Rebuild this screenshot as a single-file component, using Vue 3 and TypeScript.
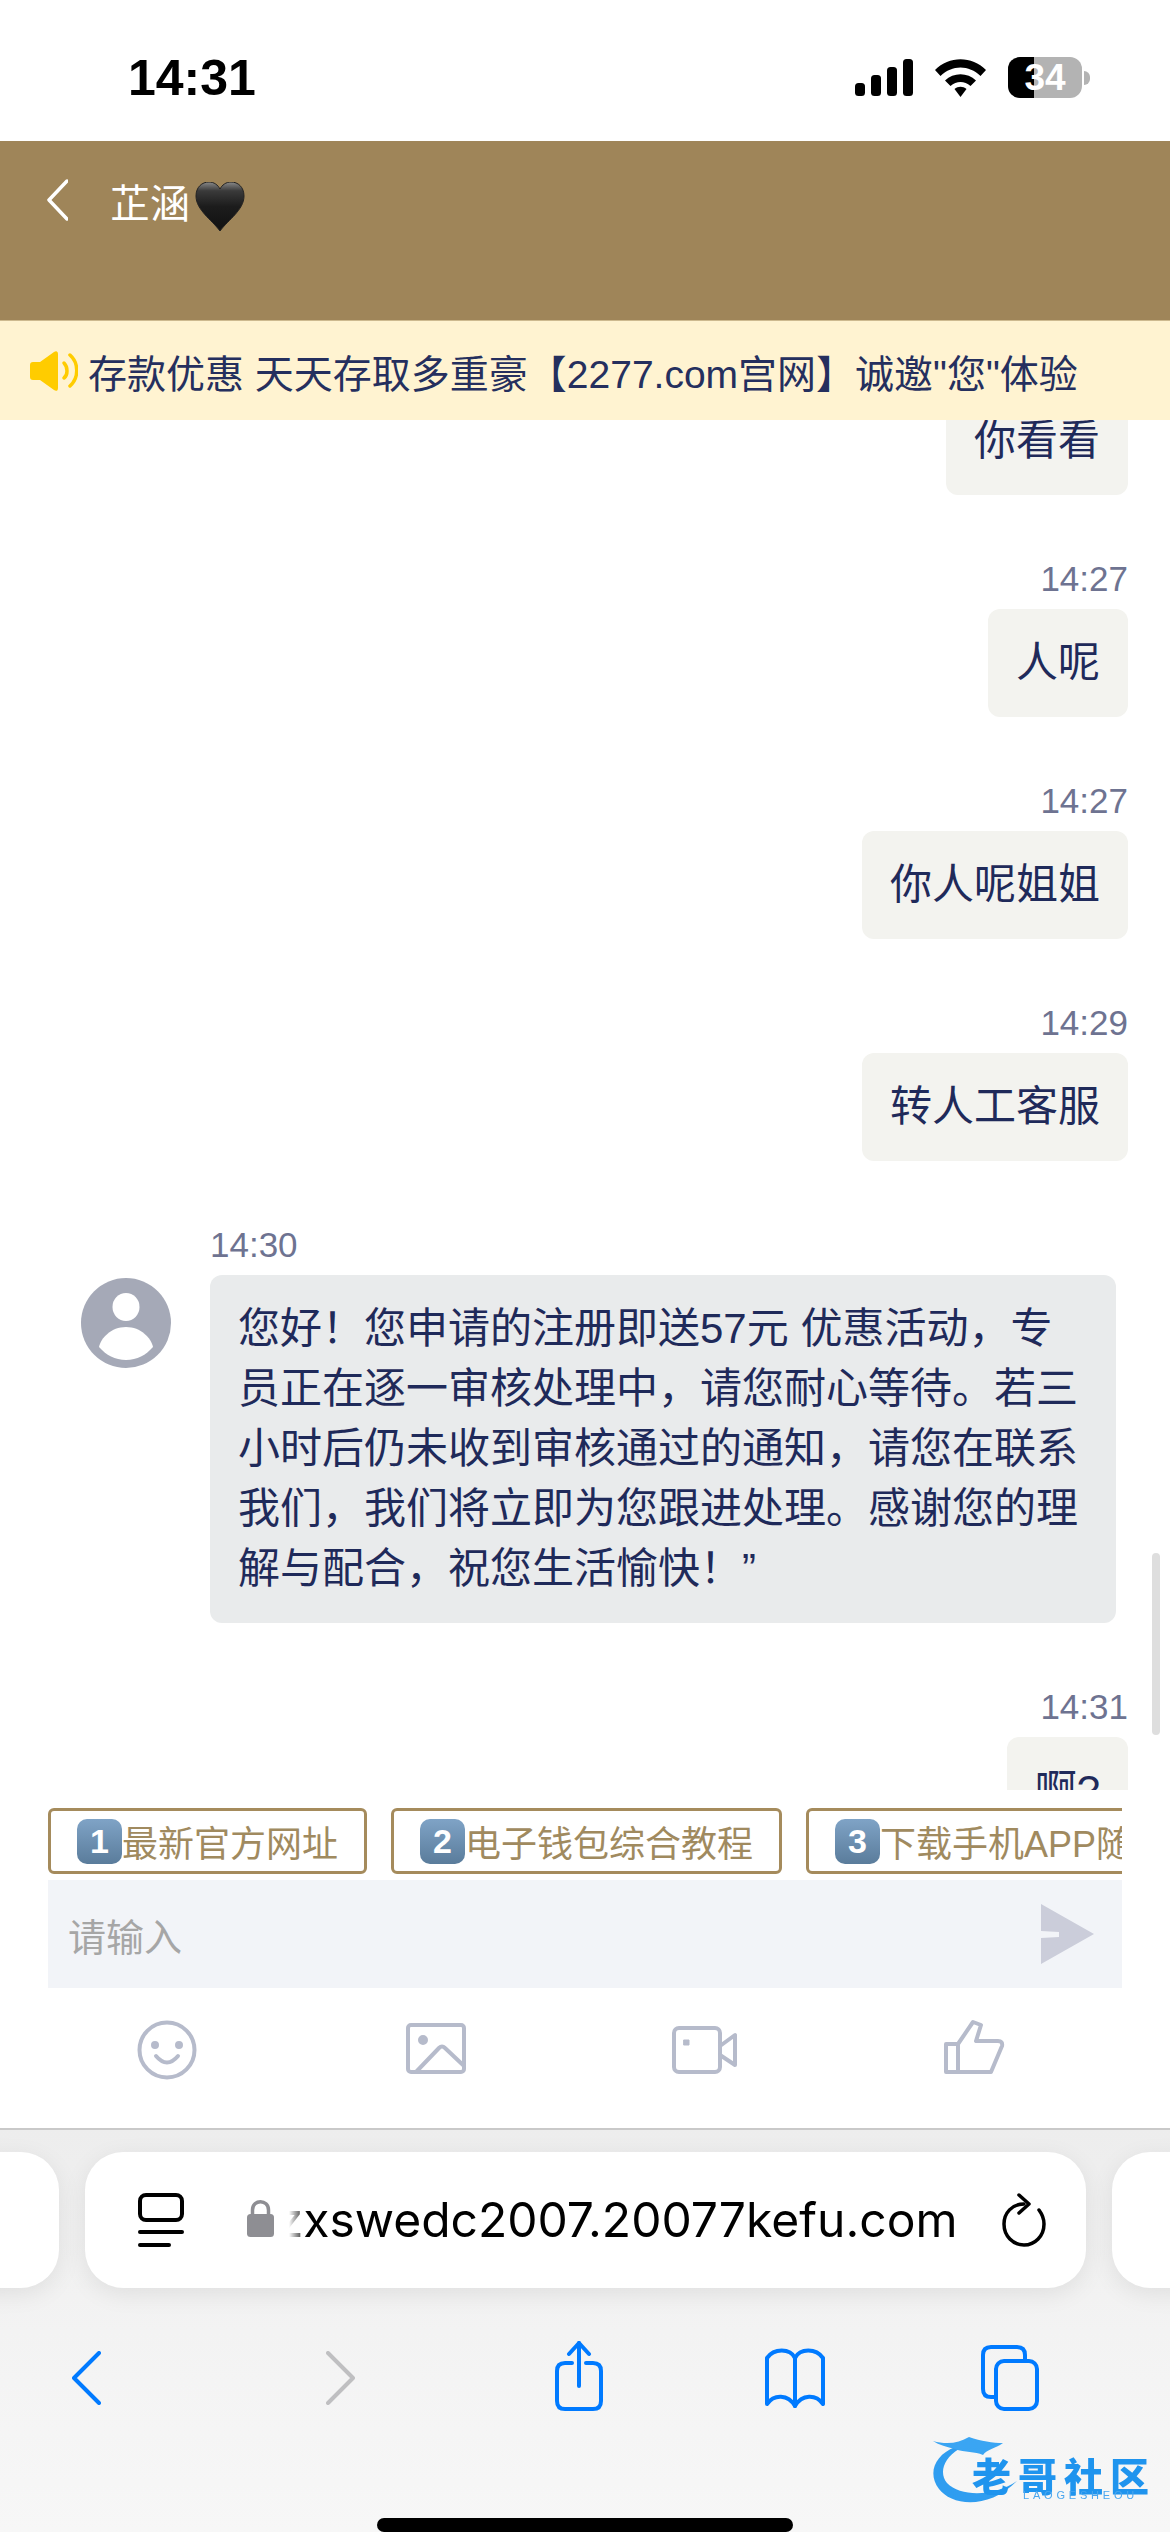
<script setup lang="ts">
interface Message {
  id: number;
  mine: boolean;
  time?: string;
  text: string;
}

const messages: Message[] = [
  { id: 1, mine: true, text: "你看看" },
  { id: 2, mine: true, time: "14:27", text: "人呢" },
  { id: 3, mine: true, time: "14:27", text: "你人呢姐姐" },
  { id: 4, mine: true, time: "14:29", text: "转人工客服" },
  {
    id: 5,
    mine: false,
    time: "14:30",
    text: "您好！您申请的注册即送57元 优惠活动，专员正在逐一审核处理中，请您耐心等待。若三小时后仍未收到审核通过的通知，请您在联系我们，我们将立即为您跟进处理。感谢您的理解与配合，祝您生活愉快！”",
  },
  { id: 6, mine: true, time: "14:31", text: "啊?" },
];

const quickLinks = [
  { key: "1", label: "最新官方网址" },
  { key: "2", label: "电子钱包综合教程" },
  { key: "3", label: "下载手机APP随时随地" },
];
</script>

<template>
  <div class="phone">
    <div class="status">
      <span class="clock">14:31</span>
      <div class="status-icons">
        <svg width="58" height="37" viewBox="0 0 58 37" fill="#000">
          <rect x="0" y="24" width="10" height="13" rx="3.5" />
          <rect x="16" y="16" width="10" height="21" rx="3.5" />
          <rect x="32" y="8" width="10" height="29" rx="3.5" />
          <rect x="48" y="0" width="10" height="37" rx="3.5" />
        </svg>
        <svg class="wifi" width="51" height="38" viewBox="0 0 51 38" fill="#000">
          <path d="M0 11 C14 -3.500 37 -3.500 51 11 L45.500 17 C34 5.500 17 5.500 5.500 17 Z" />
          <path d="M10 21.500 C18.500 13 32.500 13 41 21.500 L35.500 27 C29.500 21.500 21.500 21.500 15.500 27 Z" />
          <path d="M19.500 30 C23 27 28 27 31.500 30 L25.500 38 Z" />
        </svg>
        <div class="battery">
          <div class="battery-body">
            <div class="battery-fill"></div>
            <span class="battery-num">34</span>
          </div>
          <div class="battery-nub"></div>
        </div>
      </div>
    </div>

    <header class="header">
      <svg width="21" height="42" viewBox="0 0 21 42" fill="none">
        <path d="M20 2 L2 21 L20 40" stroke="#fff" stroke-width="3.500" stroke-linecap="round" stroke-linejoin="round" />
      </svg>
      <span class="title">芷涵</span>
      <svg class="heart" width="50" height="49" viewBox="0 0 50 49">
        <defs>
          <linearGradient id="heartFill" x1="0" y1="0" x2="0" y2="1">
            <stop offset="0" stop-color="#8a8a8a" />
            <stop offset="0.18" stop-color="#3a3a3a" />
            <stop offset="0.5" stop-color="#1c1c1c" />
            <stop offset="1" stop-color="#111" />
          </linearGradient>
        </defs>
        <path d="M25 49 C17 38 1 28 1 14 C1 5 7 0 14 0 C19 0 23 3 25 7 C27 3 31 0 36 0 C43 0 49 5 49 14 C49 28 33 38 25 49 Z" fill="url(#heartFill)" stroke="#222" stroke-width="1" />
      </svg>
    </header>

    <div class="notice">
      <svg width="48" height="40" viewBox="0 0 48 40" fill="#ffcc00">
        <path d="M0 14 C0 12 1 11 3 11 L10 11 L24 1 C26 -0.500 28 0 28 3 L28 37 C28 40 26 40.500 24 39 L10 29 L3 29 C1 29 0 28 0 26 Z" />
        <path d="M34 12 C38 16 38 24 34 27" fill="none" stroke="#ffcc00" stroke-width="3.500" stroke-linecap="round" />
        <path d="M40 4 C49 12 49 27 40 35" fill="none" stroke="#ffcc00" stroke-width="3.500" stroke-linecap="round" />
      </svg>
      <span class="notice-text">存款优惠 天天存取多重豪【2277.com宫网】诚邀"您"体验</span>
    </div>

    <main class="chat">
      <div class="scrollbar"></div>
      <div class="messages">
        <template v-for="msg in messages" :key="msg.id">
          <div v-if="msg.mine" class="msg-mine">
            <span v-if="msg.time" class="time">{{ msg.time }}</span>
            <div class="bubble bubble-mine">{{ msg.text }}</div>
          </div>
          <div v-else class="msg-other">
            <svg class="avatar" width="90" height="90" viewBox="0 0 90 90">
              <circle cx="45" cy="45" r="45" fill="#a5a9b7" />
              <ellipse cx="45" cy="29" rx="13.500" ry="14" fill="#fff" />
              <path d="M45 49 C60 49 70 60 72 69 C65 77 56 82 45 82 C34 82 25 77 18 69 C20 60 30 49 45 49 Z" fill="#fff" />
            </svg>
            <div class="other-body">
              <span class="time">{{ msg.time }}</span>
              <div class="bubble bubble-other">{{ msg.text }}</div>
            </div>
          </div>
        </template>
      </div>
    </main>

    <div class="quick">
      <div v-for="link in quickLinks" :key="link.key" class="quick-btn">
        <span class="keycap">{{ link.key }}</span>{{ link.label }}
      </div>
    </div>

    <div class="input-bar">
      <span class="placeholder">请输入</span>
      <svg width="53" height="60" viewBox="0 0 53 60" fill="#cbcdda">
        <path d="M0 0 L53 30 L0 60 L0 34 L18 33 L18 28 L0 27 Z" />
      </svg>
    </div>

    <div class="tools">
      <div class="tool">
        <svg width="70" height="70" viewBox="0 0 70 70" fill="none" stroke="#b6bbcb" stroke-width="4" stroke-linecap="round" stroke-linejoin="round">
          <circle cx="35" cy="35" r="27.500" />
          <circle cx="23" cy="30" r="2" fill="#b6bbcb" />
          <circle cx="47" cy="30" r="2" fill="#b6bbcb" />
          <path d="M24 41 Q35 54 46 41" />
        </svg>
      </div>
      <div class="tool">
        <svg width="70" height="70" viewBox="0 0 70 70" fill="none" stroke="#b6bbcb" stroke-width="4" stroke-linecap="round" stroke-linejoin="round">
          <rect x="7" y="10" width="56" height="47" rx="3" />
          <circle cx="22" cy="25" r="3" fill="#b6bbcb" />
          <path d="M15 57 L38 33 Q41 30 44 33 L62 50" />
        </svg>
      </div>
      <div class="tool">
        <svg width="70" height="70" viewBox="0 0 70 70" fill="none" stroke="#b6bbcb" stroke-width="4" stroke-linecap="round" stroke-linejoin="round">
          <rect x="5" y="13" width="46" height="44" rx="5" />
          <path d="M51 31 L66 20 L66 50 L51 40" />
          <rect x="15" y="25" width="5" height="5" fill="#b6bbcb" stroke-width="1" />
        </svg>
      </div>
      <div class="tool">
        <svg width="70" height="70" viewBox="0 0 70 70" fill="none" stroke="#b6bbcb" stroke-width="4" stroke-linecap="round" stroke-linejoin="round">
          <rect x="8" y="29" width="12" height="28" />
          <path d="M20 29 L35 7 L43 10 L38 26 L60 26 Q65 26 64 31 L53 57 L20 57" />
        </svg>
      </div>
    </div>

    <footer class="toolbar">
      <div class="tabs-row">
        <div class="side-tab"></div>
        <div class="url-pill">
          <svg class="tab-icon" width="46" height="54" viewBox="0 0 46 54" fill="none" stroke="#000" stroke-width="4" stroke-linecap="round">
            <rect x="2" y="2" width="42" height="25" rx="6" />
            <path d="M2 39 H44" />
            <path d="M2 52 H31" />
          </svg>
          <svg class="lock" width="27" height="39" viewBox="0 0 27 39" fill="#8e8e93">
            <path d="M5.500 17 V12 C5.500 1 21.500 1 21.500 12 V17" fill="none" stroke="#8e8e93" stroke-width="3.500" />
            <rect x="0" y="16" width="27" height="23" rx="3.500" />
          </svg>
          <div class="url"><span>zxswedc2007.20077kefu.com</span></div>
          <svg class="reload" width="44" height="54" viewBox="0 0 44 54" fill="none" stroke="#000" stroke-width="3.500" stroke-linecap="round" stroke-linejoin="round">
            <path d="M22 11 C10 11 2 20 2 31 C2 43 11 52 22 52 C33 52 42 43 42 31 C42 25 40 21 37 17" />
            <path d="M17 2 L27 11 L17 20" />
          </svg>
        </div>
        <div class="side-tab"></div>
      </div>

      <nav class="nav">
        <svg class="nav-back" width="29" height="54" viewBox="0 0 29 54" fill="none" stroke="#007aff" stroke-width="4" stroke-linecap="round" stroke-linejoin="round">
          <path d="M27 2 L2 27 L27 52" />
        </svg>
        <svg class="nav-forward" width="29" height="54" viewBox="0 0 29 54" fill="none" stroke="#bfbfc1" stroke-width="4" stroke-linecap="round" stroke-linejoin="round">
          <path d="M2 2 L27 27 L2 52" />
        </svg>
        <svg class="nav-share" width="48" height="70" viewBox="0 0 48 70" fill="none" stroke="#007aff" stroke-width="4" stroke-linecap="round" stroke-linejoin="round">
          <path d="M17 22 H10 Q2 22 2 30 V60 Q2 68 10 68 H38 Q46 68 46 60 V30 Q46 22 38 22 H31" />
          <path d="M24 45 V2" />
          <path d="M14 13 L24 2 L34 13" />
        </svg>
        <svg class="nav-book" width="62" height="60" viewBox="0 0 62 60" fill="none" stroke="#007aff" stroke-width="4" stroke-linecap="round" stroke-linejoin="round">
          <path d="M31 10 C26 0 10 0 3 10 V56 C10 46 24 46 31 58 C38 46 52 46 59 56 V10 C52 0 36 0 31 10 Z" />
          <path d="M31 10 V58" />
        </svg>
        <svg class="nav-tabs" width="58" height="66" viewBox="0 0 58 66" fill="none" stroke="#007aff" stroke-width="4" stroke-linecap="round" stroke-linejoin="round">
          <path d="M44 16 V10 Q44 2 36 2 H10 Q2 2 2 10 V44 Q2 52 10 52 H15" />
          <rect x="15" y="16" width="41" height="48" rx="8" />
        </svg>
      </nav>

      <div class="home-bar"></div>
    </footer>

    <div class="watermark">
      <svg width="100" height="85" viewBox="0 0 100 85" class="dragon">
        <path d="M30 22 C10 30 2 48 14 64 C26 80 62 86 92 56 C68 72 36 72 22 58 C14 48 18 34 34 24 Z" fill="#2f9df0" />
        <path d="M8 16 C22 20 34 18 44 12 C56 16 68 18 78 18 C70 24 62 24 58 30 C50 26 40 28 30 24 C22 22 14 20 8 16 Z" fill="#3aa5f3" />
      </svg>
      <span class="wm-name">老哥社区</span>
      <span class="wm-sub">LAOGESHEOU</span>
    </div>
  </div>
</template>

<style scoped>
.phone {
  position: relative;
  width: 1170px;
  height: 2532px;
  overflow: hidden;
  background: #fff;
  font-family: "Liberation Sans", "Noto Sans CJK SC", sans-serif;
}

.status {
  height: 141px;
  padding: 0 80px 0 128px;
  display: flex;
  justify-content: space-between;
  align-items: flex-start;
  box-sizing: border-box;
}

.clock {
  margin-top: 49px;
  font-size: 50px;
  line-height: 58px;
  font-weight: 700;
  color: #000;
}

.status-icons {
  margin-top: 57px;
  display: flex;
  align-items: center;
}

.wifi {
  margin-left: 22px;
}

.battery {
  margin-left: 22px;
  display: flex;
  align-items: center;
}

.battery-body {
  position: relative;
  width: 74px;
  height: 41px;
  border-radius: 12px;
  background: #b3b3b3;
  overflow: hidden;
  display: flex;
  align-items: center;
  justify-content: center;
}

.battery-fill {
  position: absolute;
  left: 0;
  top: 0;
  bottom: 0;
  width: 26px;
  background: #000;
}

.battery-num {
  position: relative;
  font-size: 37px;
  font-weight: 700;
  color: #fff;
}

.battery-nub {
  width: 6px;
  height: 14px;
  margin-left: 2px;
  border-radius: 0 7px 7px 0;
  background: #b3b3b3;
}

.header {
  height: 180px;
  padding: 38px 0 0 47px;
  box-sizing: border-box;
  display: flex;
  align-items: flex-start;
  background: #9f8559;
  border-bottom: 1px solid #cdb98f;
}

.title {
  margin-left: 42px;
  font-size: 40px;
  line-height: 50px;
  color: #fff;
}

.heart {
  margin-left: 5px;
  margin-top: 3px;
}

.notice {
  height: 99px;
  padding-left: 30px;
  display: flex;
  align-items: center;
  gap: 10px;
  background: #fff3d1;
  position: relative;
  z-index: 1;
}

.notice-text {
  font-size: 39px;
  color: #252f5e;
  white-space: nowrap;
}

.chat {
  position: relative;
  height: 1370px;
  overflow: hidden;
}

.scrollbar {
  position: absolute;
  top: 1133px;
  right: 10px;
  width: 8px;
  height: 182px;
  border-radius: 4px;
  background: #dedede;
}

.messages {
  margin-top: -33px;
  padding: 0 42px 0 81px;
  display: flex;
  flex-direction: column;
  gap: 64px;
}

.msg-mine {
  display: flex;
  flex-direction: column;
  align-items: flex-end;
}

.msg-other {
  display: flex;
  gap: 39px;
}

.avatar {
  flex-shrink: 0;
  margin-top: 53px;
}

.other-body {
  flex: 1;
  display: flex;
  flex-direction: column;
  align-items: flex-start;
}

.time {
  height: 40px;
  margin-bottom: 10px;
  font-size: 35px;
  line-height: 40px;
  color: #6e7391;
}

.bubble {
  padding: 24px 28px;
  border-radius: 12px;
  font-size: 42px;
  line-height: 60px;
  color: #1f2a5a;
}

.bubble-mine {
  background: #f3f3ef;
}

.bubble-other {
  width: 906px;
  box-sizing: border-box;
  background: #e9ebec;
}

.quick {
  margin: 18px 48px 0;
  display: flex;
  gap: 24px;
  overflow: hidden;
}

.quick-btn {
  flex-shrink: 0;
  height: 66px;
  padding: 0 26px;
  box-sizing: border-box;
  display: flex;
  align-items: center;
  border: 3px solid #a58b5c;
  border-radius: 6px;
  font-size: 36px;
  color: #a08a5f;
  white-space: nowrap;
}

.keycap {
  width: 45px;
  height: 45px;
  border-radius: 10px;
  display: flex;
  align-items: center;
  justify-content: center;
  background: linear-gradient(#7fa3c6, #5a7c9b);
  font-size: 34px;
  font-weight: 700;
  color: #fff;
}

.input-bar {
  margin: 6px 48px 0;
  height: 108px;
  padding: 0 28px 0 20px;
  display: flex;
  align-items: center;
  justify-content: space-between;
  background: #f2f4f8;
}

.placeholder {
  font-size: 38px;
  color: #a6a6a6;
}

.tools {
  height: 142px;
  padding: 0 0 16px 33px;
  box-sizing: border-box;
  display: grid;
  grid-template-columns: repeat(4, 268.5px);
  align-items: center;
  border-bottom: 2px solid #c9c9c9;
}

.tool {
  display: flex;
  justify-content: center;
}

.toolbar {
  height: 402px;
  display: flex;
  flex-direction: column;
  background: linear-gradient(#ededed, #f3f3f3 50%, #f7f7f7);
}

.tabs-row {
  margin-top: 22px;
  display: flex;
  justify-content: center;
  gap: 26px;
  overflow: hidden;
  padding: 20px 0 40px;
  margin-bottom: -40px;
  transform: translateY(-20px);
}

.side-tab {
  flex: 0 0 200px;
  height: 136px;
  border-radius: 38px;
  background: #fff;
  box-shadow: 0 6px 24px rgba(0, 0, 0, 0.08);
}

.url-pill {
  flex: 0 0 1001px;
  height: 136px;
  box-sizing: border-box;
  display: flex;
  align-items: center;
  border-radius: 38px;
  background: #fff;
  box-shadow: 0 6px 24px rgba(0, 0, 0, 0.08);
}

.tab-icon {
  margin-left: 53px;
  flex-shrink: 0;
}

.lock {
  margin-left: 63px;
  margin-top: -6px;
  flex-shrink: 0;
}

.url {
  margin-left: 15px;
  width: 669px;
  display: flex;
  justify-content: flex-end;
  overflow: hidden;
  font-family: Inter, "Liberation Sans", sans-serif;
  font-size: 48px;
  line-height: 60px;
  color: #000;
  white-space: nowrap;
  -webkit-mask-image: linear-gradient(to right, transparent 0, #000 18px);
  mask-image: linear-gradient(to right, transparent 0, #000 18px);
}

.reload {
  margin-left: 44px;
  flex-shrink: 0;
}

.nav {
  display: flex;
  align-items: flex-start;
  height: 140px;
  padding: 16px 0 0 72px;
  margin-top: 0;
}

.nav-back {
  margin-top: 32px;
}

.nav-forward {
  margin-top: 32px;
  margin-left: 225px;
}

.nav-share {
  margin-left: 200px;
  margin-top: 22px;
}

.nav-book {
  margin-left: 161px;
  margin-top: 29px;
}

.nav-tabs {
  margin-left: 155px;
  margin-top: 26px;
}

.home-bar {
  align-self: center;
  margin-top: 64px;
  width: 416px;
  height: 15px;
  border-radius: 8px;
  background: #000;
}

.watermark {
  position: absolute;
  left: 925px;
  top: 2425px;
  width: 235px;
  height: 85px;
  filter: blur(0.6px);
}

.dragon {
  position: absolute;
  left: 0;
  top: 0;
}

.wm-name {
  position: absolute;
  left: 47px;
  top: 27px;
  font-family: "Noto Sans CJK SC", sans-serif;
  font-size: 39px;
  line-height: 44px;
  font-weight: 900;
  letter-spacing: 7px;
  color: #1f94ee;
  white-space: nowrap;
}

.wm-sub {
  position: absolute;
  left: 98px;
  top: 64px;
  font-size: 11px;
  line-height: 12px;
  letter-spacing: 3.800px;
  color: #4aa6ee;
  white-space: nowrap;
}
</style>
